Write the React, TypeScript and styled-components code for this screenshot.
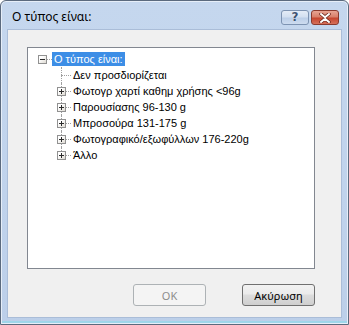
import styled, { createGlobalStyle, css } from "styled-components";

const GlobalStyle = createGlobalStyle`
  html, body {
    margin: 0;
    padding: 0;
  }
  body {
    width: 349px;
    height: 325px;
    overflow: hidden;
    background: #ffffff;
    font-family: "Liberation Sans", Arial, sans-serif;
  }
`;

const Window = styled.div`
  width: 349px;
  height: 325px;
  box-sizing: border-box;
  border: 1px solid #5b6a7e;
  border-radius: 6px 6px 0 0;
  background: linear-gradient(#c5d7ee 0%, #c0d3ec 60%, #bccfe9 100%);
  box-shadow: inset 0 0 0 1px #e6eef8, inset 0 -3px 0 #9fd6ea;
  display: flex;
  flex-direction: column;
`;

const TitleBar = styled.div`
  height: 29px;
  display: flex;
  align-items: flex-start;
  padding: 0 9px 0 11px;
`;

const Title = styled.div`
  flex: 1;
  padding-top: 8px;
  font-family: "Noto Sans", "Open Sans", sans-serif;
  font-size: 12px;
  line-height: 16px;
  color: #000;
`;

const CaptionButtons = styled.div`
  display: flex;
  gap: 2px;
  margin-top: 9px;
`;

const CaptionButton = styled.div<{ $close?: boolean }>`
  width: 28px;
  height: 15px;
  box-sizing: border-box;
  border-radius: 3px;
  display: flex;
  align-items: center;
  justify-content: center;
  ${(p) =>
    p.$close
      ? css`
          border: 1px solid #8a3a2e;
          background: linear-gradient(#e8a493 0%, #d8806b 45%, #c6462f 55%, #d5705a 100%);
        `
      : css`
          border: 1px solid #7d93b2;
          background: linear-gradient(#e4ecf7 0%, #d3e0f1 45%, #bccfe8 55%, #cddcf0 100%);
        `}
`;

const HelpGlyph = styled.span`
  font-family: "DejaVu Sans", sans-serif;
  font-size: 12px;
  font-weight: bold;
  line-height: 13px;
  color: #3d5372;
  text-shadow: 0 0 1px #ffffff;
`;

const Client = styled.div`
  flex: 1;
  margin: 0 7px 7px 7px;
  background: #f0f0f0;
  box-shadow: 0 0 0 1px #aabdd8;
  padding: 17px 26px 11px 19px;
  display: flex;
  flex-direction: column;
`;

const TreeBox = styled.div`
  height: 222px;
  box-sizing: border-box;
  border: 1px solid #828790;
  background: #ffffff;
  padding-top: 3px;
`;

const Row = styled.div<{ $depth: number }>`
  display: flex;
  align-items: flex-start;
  height: 16px;
  padding-left: ${(p) => 10 + p.$depth * 19}px;
`;

const Gutter = styled.span<{ $child?: boolean; $last?: boolean }>`
  position: relative;
  flex: none;
  width: 14px;
  height: 16px;

  &::after {
    content: "";
    position: absolute;
    left: 4px;
    right: 0;
    top: 8px;
    border-top: 1px dotted #a0a0a0;
  }

  ${(p) =>
    p.$child &&
    css`
      &::before {
        content: "";
        position: absolute;
        left: 4px;
        top: 0;
        height: ${p.$last ? 8 : 16}px;
        border-left: 1px dotted #a0a0a0;
      }
    `}
`;

const Expander = styled.span`
  position: absolute;
  z-index: 1;
  left: 0;
  top: 4px;
  width: 9px;
  height: 9px;
  box-sizing: border-box;
  border: 1px solid #919191;
  background: linear-gradient(135deg, #ffffff 30%, #dedad2 100%);
  display: flex;
  align-items: center;
  justify-content: center;
`;

const Label = styled.span<{ $selected?: boolean }>`
  margin-top: 1px;
  height: 14px;
  padding: 0 2px;
  font-size: 11px;
  line-height: 14px;
  white-space: nowrap;
  color: ${(p) => (p.$selected ? "#ffffff" : "#000000")};
  background: ${(p) => (p.$selected ? "#3d8ee6" : "transparent")};
`;

const ButtonRow = styled.div`
  margin-top: 15px;
  display: flex;
  justify-content: flex-end;
  gap: 36px;
`;

const Button = styled.button`
  width: 73px;
  height: 22px;
  box-sizing: border-box;
  border-radius: 3px;
  border: 1px solid #707070;
  background: linear-gradient(#f2f2f2 0%, #ebebeb 45%, #dddddd 50%, #cfcfcf 100%);
  font-family: "Noto Sans", "Open Sans", sans-serif;
  font-size: 11px;
  color: #000;
  padding: 0;

  &:disabled {
    border-color: #adb2b5;
    background: #f4f4f4;
    color: #8d8d8d;
  }
`;

const Sign = ({ plus }: { plus?: boolean }) => (
  <svg width="7" height="7" viewBox="0 0 7 7">
    <path d="M1 3.5H6" stroke="#2b2b2b" strokeWidth="1" />
    {plus && <path d="M3.5 1V6" stroke="#2b2b2b" strokeWidth="1" />}
  </svg>
);

const items = [
  { label: "Δεν προσδιορίζεται", expandable: false },
  { label: "Φωτογρ χαρτί καθημ χρήσης <96g", expandable: true },
  { label: "Παρουσίασης 96-130 g", expandable: true },
  { label: "Μπροσούρα 131-175 g", expandable: true },
  { label: "Φωτογραφικό/εξωφύλλων 176-220g", expandable: true },
  { label: "Άλλο", expandable: true },
];

export default function App() {
  return (
    <>
      <GlobalStyle />
      <Window>
        <TitleBar>
          <Title>Ο τύπος είναι:</Title>
          <CaptionButtons>
            <CaptionButton>
              <HelpGlyph>?</HelpGlyph>
            </CaptionButton>
            <CaptionButton $close>
              <svg width="12" height="10" viewBox="0 0 12 10">
                <path
                  d="M2 1L6 4.2L10 1M2 9L6 5.8L10 9"
                  stroke="#6a241a"
                  strokeWidth="3.4"
                  fill="none"
                  strokeLinecap="round"
                />
                <path
                  d="M2 1L6 4.2L10 1M2 9L6 5.8L10 9"
                  stroke="#ffffff"
                  strokeWidth="2"
                  fill="none"
                  strokeLinecap="round"
                />
              </svg>
            </CaptionButton>
          </CaptionButtons>
        </TitleBar>
        <Client>
          <TreeBox>
            <Row $depth={0}>
              <Gutter>
                <Expander>
                  <Sign />
                </Expander>
              </Gutter>
              <Label $selected>Ο τύπος είναι:</Label>
            </Row>
            {items.map((item, i) => (
              <Row $depth={1} key={item.label}>
                <Gutter $child $last={i === items.length - 1}>
                  {item.expandable && (
                    <Expander>
                      <Sign plus />
                    </Expander>
                  )}
                </Gutter>
                <Label>{item.label}</Label>
              </Row>
            ))}
          </TreeBox>
          <ButtonRow>
            <Button disabled>OK</Button>
            <Button>Ακύρωση</Button>
          </ButtonRow>
        </Client>
      </Window>
    </>
  );
}
